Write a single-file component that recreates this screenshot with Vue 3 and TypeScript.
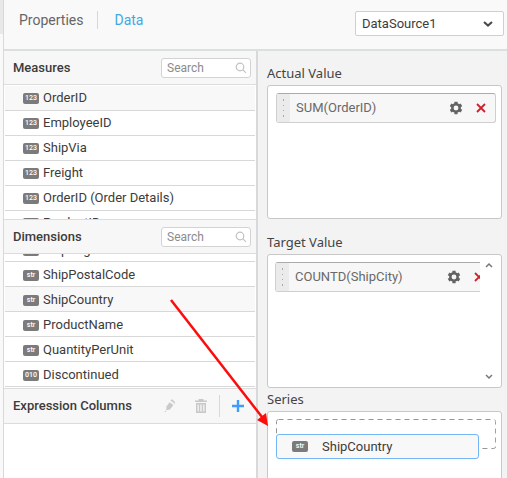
<script setup lang="ts">
import { ref } from 'vue'

interface Column {
  name: string
  type: string
  active?: boolean
}

const source = ref('DataSource1')
const measureQuery = ref('')
const dimensionQuery = ref('')

const measures: Column[] = [
  { name: 'OrderID', type: '123', active: true },
  { name: 'EmployeeID', type: '123' },
  { name: 'ShipVia', type: '123' },
  { name: 'Freight', type: '123' },
  { name: 'OrderID (Order Details)', type: '123' },
  { name: 'ProductID', type: '123' },
]

const dimensions: Column[] = [
  { name: 'ShipRegion', type: 'str' },
  { name: 'ShipPostalCode', type: 'str' },
  { name: 'ShipCountry', type: 'str', active: true },
  { name: 'ProductName', type: 'str' },
  { name: 'QuantityPerUnit', type: 'str' },
  { name: 'Discontinued', type: '010' },
]

const wells = [
  { title: 'Actual Value', field: 'SUM(OrderID)', scroll: false },
  { title: 'Target Value', field: 'COUNTD(ShipCity)', scroll: true },
]
</script>

<template>
  <div class="app">
    <div class="gutter"><div class="gutter-thumb"></div></div>
    <div class="designer">
      <header class="topbar">
        <nav class="tabs">
          <button class="tab" type="button">Properties</button>
          <button class="tab selected" type="button">Data</button>
        </nav>
        <div class="source">
          <select v-model="source" aria-label="Data source">
            <option>DataSource1</option>
          </select>
          <svg class="caret" width="12" height="8" viewBox="0 0 12 8"><path d="M2 2l4 3.6L10 2" /></svg>
        </div>
      </header>

      <main class="body">
        <section class="columns">
          <div class="bar">
            <h2>Measures</h2>
            <label class="search">
              <input v-model="measureQuery" type="text" placeholder="Search" aria-label="Search measures" />
              <svg width="12" height="12" viewBox="0 0 12 12"><circle cx="5" cy="5" r="3.8" /><path d="M7.7 7.7l3.200 3.200" /></svg>
            </label>
          </div>
          <ul class="list measures">
            <li v-for="c in measures" :key="c.name" :class="{ active: c.active }">
              <span class="badge">{{ c.type }}</span>{{ c.name }}
            </li>
          </ul>

          <div class="bar">
            <h2>Dimensions</h2>
            <label class="search">
              <input v-model="dimensionQuery" type="text" placeholder="Search" aria-label="Search dimensions" />
              <svg width="12" height="12" viewBox="0 0 12 12"><circle cx="5" cy="5" r="3.8" /><path d="M7.7 7.7l3.200 3.200" /></svg>
            </label>
          </div>
          <ul class="list dimensions">
            <li v-for="c in dimensions" :key="c.name" :class="{ active: c.active }">
              <span class="badge">{{ c.type }}</span>{{ c.name }}
            </li>
          </ul>

          <div class="bar expressions">
            <h2>Expression Columns</h2>
            <div class="tools">
              <button type="button" aria-label="Edit expression">
                <svg width="14" height="16" viewBox="0 0 14 16" fill="#cacaca">
                  <path d="M6.600 4.200l3.800 2.800-3.400 4.600-3.800.7.300-4zM7.400 2.600l1.400-1.300 2.900 2.200.1 2.200-.8.300-.3-1.300zM2.200 12.400l1.200 1-1.900.9z" />
                </svg>
              </button>
              <button type="button" aria-label="Delete expression">
                <svg width="14" height="16" viewBox="0 0 14 16" fill="#c8c8c8">
                  <path d="M4.5 1h5v1.500H13V4H1V2.500h3.500zM2 5h10v10H2zM3.500 6.500v7h1.300v-7zM6.300 6.500v7h1.400v-7zM9.200 6.500v7h1.300v-7z" fill-rule="evenodd" />
                </svg>
              </button>
              <button class="add" type="button" aria-label="Add expression">
                <svg width="12" height="12" viewBox="0 0 12 12"><path d="M6 0v12M0 6h12" stroke="#3f9bfc" stroke-width="2.400" /></svg>
              </button>
            </div>
          </div>
        </section>

        <section class="wells">
          <template v-for="w in wells" :key="w.title">
            <h3>{{ w.title }}</h3>
            <div class="well" :class="{ scrolling: w.scroll }">
              <div class="viewport">
                <div class="field">
                  <span class="grip">
                    <svg width="3" height="20" viewBox="0 0 3 20" fill="#a8a8a8">
                      <path d="M1 1h1v2H1zM1 7h1v1H1zM1 12h1v1H1zM1 17h1v2H1z" />
                    </svg>
                  </span>
                  <span class="field-name">{{ w.field }}</span>
                  <button type="button" aria-label="Settings">
                    <svg width="14" height="14" viewBox="0 0 14 14">
                      <circle cx="7" cy="7" r="3.700" fill="none" stroke="#636363" stroke-width="2.500" />
                      <path d="M7 .7v2M7 11.300v2M1.540 3.850l1.750 1M10.700 9.150l1.750 1M1.540 10.150l1.750-1M10.700 4.850l1.750-1" stroke="#636363" stroke-width="3.200" />
                    </svg>
                  </button>
                  <button type="button" aria-label="Remove">
                    <svg width="10" height="10" viewBox="0 0 10 10"><path d="M1 1l8 8M9 1L1 9" stroke="#d0202c" stroke-width="1.800" /></svg>
                  </button>
                </div>
              </div>
              <div v-if="w.scroll" class="scroller">
                <svg width="8" height="6" viewBox="0 0 8 6"><path d="M1 5l3-3 3 3" /></svg>
                <svg width="8" height="6" viewBox="0 0 8 6"><path d="M1 1l3 3 3-3" /></svg>
              </div>
            </div>
          </template>

          <h3>Series</h3>
          <div class="well series">
            <div class="drop">
              <svg class="outline" width="100%" height="100%">
                <rect x="0.5" y="0.5" width="99.600%" height="29" rx="2" />
              </svg>
              <div class="dragged"><span class="badge">str</span>ShipCountry</div>
            </div>
          </div>
        </section>
      </main>
    </div>

    <svg class="arrow" width="100" height="130" viewBox="0 0 100 130">
      <path d="M1 1L92 118" stroke="#fb0d0d" stroke-width="2.500" />
      <path d="M98 127L87 121L96 114z" fill="#fb0d0d" />
    </svg>
  </div>
</template>

<style>
body {
  margin: 0;
  background: #f9f9f9;
}
</style>

<style scoped>
* {
  box-sizing: border-box;
}

.app {
  position: relative;
  display: flex;
  height: 100vh;
  min-height: 478px;
  overflow: hidden;
  color: #3c3c3c;
  font: 13px/18px Roboto, sans-serif;
}

.gutter {
  width: 4px;
  flex: none;
  border-right: 1px solid #d7d9da;
}

.gutter-thumb {
  height: 34px;
  background: #e8e8e8;
}

.designer {
  display: flex;
  flex: 1;
  flex-direction: column;
  min-width: 0;
}

.topbar {
  display: flex;
  flex: none;
  align-items: flex-start;
  justify-content: space-between;
  height: 51px;
  padding: 11px 3px 0 15px;
  background: #f9f9f9;
  border-bottom: 2px solid #dcdfe0;
}

button {
  display: flex;
  align-items: center;
  justify-content: center;
  padding: 0;
  background: none;
  border: 0;
  font: inherit;
}

.tabs {
  display: flex;
}

.tab {
  height: 18px;
  color: #666;
  font-size: 14px;
}

.tab.selected {
  margin-left: 14px;
  padding-left: 16px;
  color: #43a8e2;
  border-left: 1px solid #cfdae0;
}

.source {
  position: relative;
  width: 149px;
}

.source select {
  display: block;
  width: 100%;
  height: 25px;
  padding: 0 24px 0 6px;
  appearance: none;
  color: #3c3c3c;
  background: #fff;
  border: 1px solid #cfcfcf;
  border-radius: 2px;
  font: inherit;
}

.caret {
  position: absolute;
  top: 9px;
  right: 10px;
  fill: none;
  stroke: #484848;
  stroke-width: 2;
  pointer-events: none;
}

.body {
  display: grid;
  flex: 1;
  grid-template-columns: 254px minmax(0, 1fr);
  min-height: 0;
}

.columns {
  background: #fff;
  border-right: 2px solid #d7d9da;
}

.bar {
  display: flex;
  align-items: center;
  justify-content: space-between;
  height: 34px;
  padding: 0 5px 0 9px;
  background: #f7f7f7;
  border-bottom: 1px solid #dcdcdc;
}

h2 {
  margin: 0;
  font-size: 13px;
  font-weight: 500;
}

.search {
  position: relative;
  width: 90px;
}

.search input {
  display: block;
  width: 100%;
  height: 20px;
  padding: 0 20px 0 5px;
  color: #3c3c3c;
  background: #fff;
  border: 1px solid #d3d3d3;
  border-radius: 3px;
  font: 12px/18px Roboto, sans-serif;
}

.search input::placeholder {
  color: #8b8b8b;
}

.search svg {
  position: absolute;
  top: 4px;
  right: 4px;
  fill: none;
  stroke: #c2c2c2;
  stroke-width: 1.2;
}

.list {
  display: flex;
  flex-direction: column;
  height: 135px;
  margin: 0;
  padding: 1px;
  overflow: hidden;
  border-bottom: 1px solid #dcdcdc;
  list-style: none;
}

.dimensions {
  justify-content: flex-end;
}

.list li {
  display: flex;
  flex: none;
  align-items: center;
  height: 25px;
  padding-left: 18px;
  border-bottom: 1px solid #d8d8d8;
}

.dimensions li {
  padding-top: 2px;
}

.list li.active {
  background: #f8f8f8;
}

.badge {
  flex: none;
  width: 16px;
  height: 11px;
  margin-right: 4px;
  color: #fff;
  background: #7b7b7b;
  border-radius: 2px;
  font-size: 7px;
  font-weight: 500;
  line-height: 11px;
  text-align: center;
}

.expressions {
  height: 35px;
}

.tools {
  display: flex;
  align-items: center;
}

.tools button {
  width: 31px;
  height: 22px;
}

.tools .add {
  width: 37px;
  margin-right: -5px;
  margin-left: 3px;
  border-left: 1px solid #d8d8d8;
}

.wells {
  min-width: 0;
  padding: 12px 5px 0 9px;
  background: #f3f3f3;
}

h3 {
  margin: 0;
  padding-bottom: 2px;
  color: #444;
  font: 400 13px/20px "Noto Sans", sans-serif;
}

.well {
  display: flex;
  height: 134px;
  margin-bottom: 13px;
  background: #fff;
  border: 1px solid #c8c8c8;
  border-radius: 3px;
}

.viewport {
  flex: 1;
  min-width: 0;
  padding: 7px 5px 0 8px;
  overflow: hidden;
}

.well.scrolling {
  margin-bottom: 1px;
}

.scrolling .viewport {
  padding-right: 0;
  padding-left: 7px;
}

.field {
  display: flex;
  align-items: center;
  height: 30px;
  padding-right: 2px;
  background: #f7f7f7;
  border: 1px solid #cfcfcf;
  border-top-color: #ababab;
  border-radius: 3px;
}

.scrolling .field {
  width: 219px;
}

.grip {
  display: flex;
  align-items: center;
  justify-content: center;
  width: 13px;
  height: 100%;
  background: #ebebeb;
}

.field-name {
  flex: 1;
  padding-left: 6px;
  color: #696969;
}

.field button {
  width: 25px;
  height: 22px;
}

.scroller {
  display: flex;
  flex: none;
  flex-direction: column;
  align-items: center;
  justify-content: space-between;
  width: 21px;
  padding: 7px 3px 7px 0;
}

.scroller svg {
  fill: none;
  stroke: #777;
  stroke-width: 1.5;
}

.series {
  margin: 0;
}

.drop {
  position: relative;
  flex: 1;
  height: 30px;
  margin: 7px 5px 0 8px;
}

.outline {
  display: block;
  fill: none;
  stroke: #969696;
  stroke-dasharray: 5 4;
}

.dragged {
  position: absolute;
  top: 15px;
  left: 0;
  display: flex;
  align-items: center;
  width: 203px;
  height: 25px;
  padding-left: 15px;
  background: #f8f8f8;
  border: 1px solid #73b7f5;
  border-radius: 3px;
}

.dragged .badge {
  margin-right: 14px;
}

.arrow {
  position: absolute;
  top: 299px;
  left: 170px;
  fill: none;
  pointer-events: none;
}
</style>
